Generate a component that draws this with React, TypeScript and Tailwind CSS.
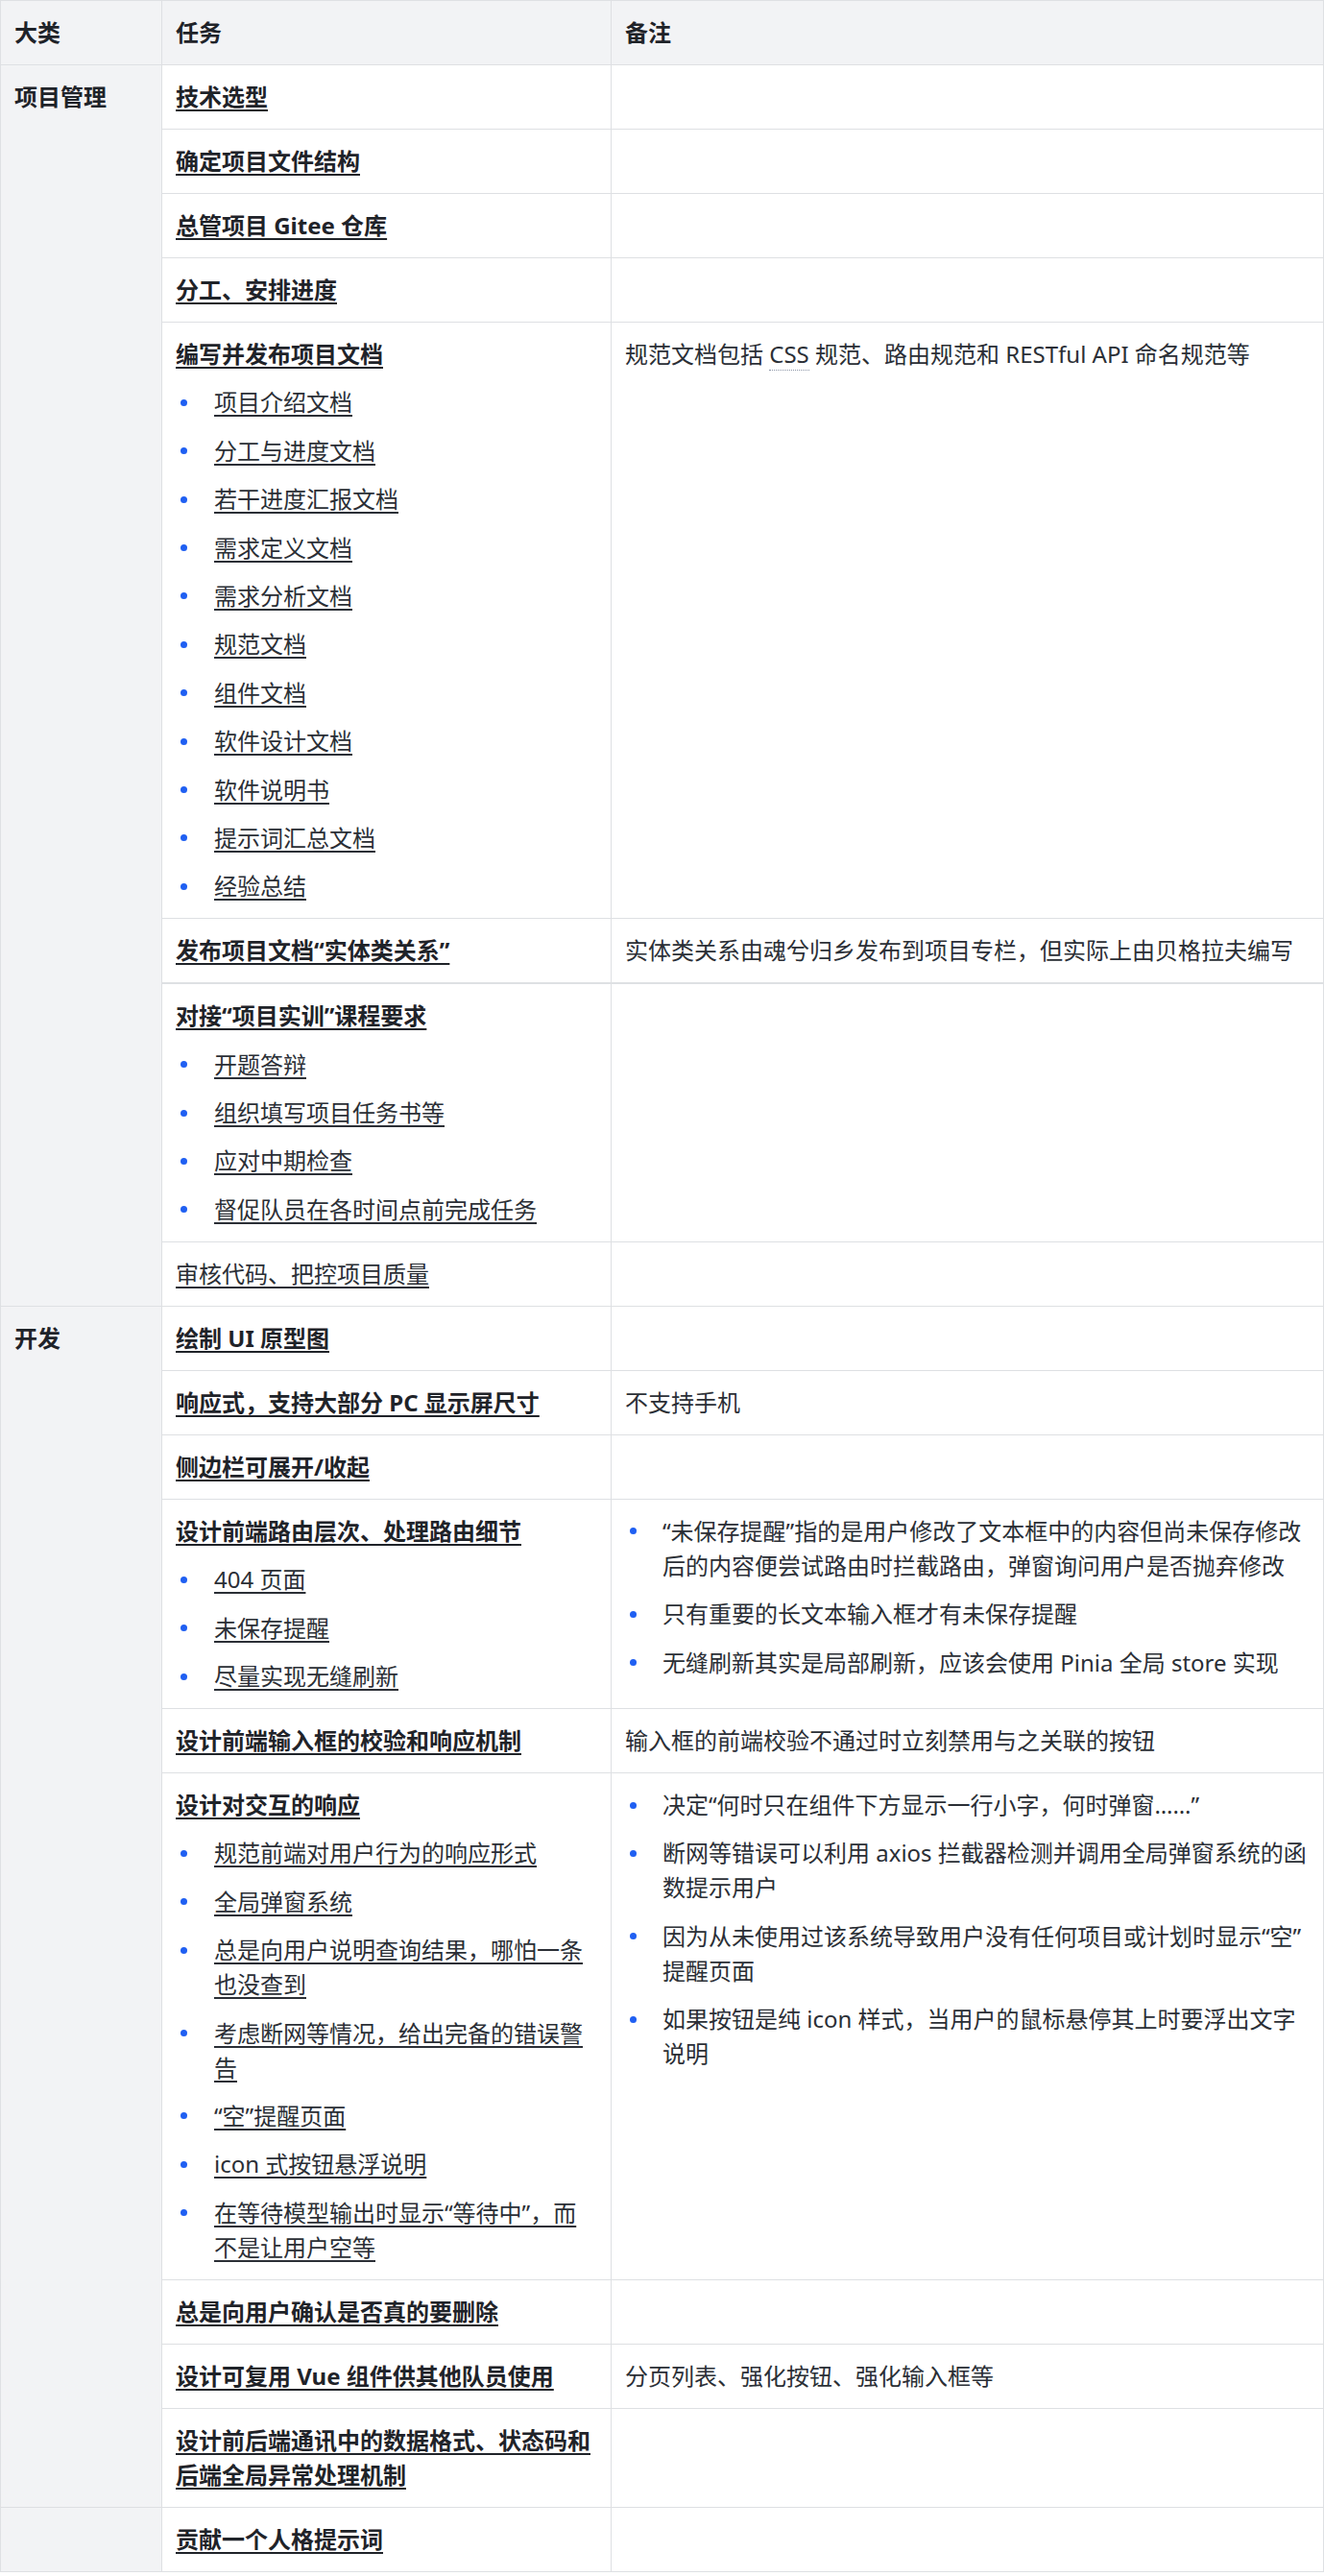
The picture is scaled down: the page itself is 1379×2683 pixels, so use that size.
import type { ReactNode } from 'react';

type Row = {
  task: string;
  bold?: boolean;
  items?: string[];
  note?: ReactNode;
  notes?: string[];
  thick?: boolean;
};

type Group = { name: string; rows: Row[] };

const groups: Group[] = [
  {
    name: '项目管理',
    rows: [
      { task: '技术选型', bold: true },
      { task: '确定项目文件结构', bold: true },
      { task: '总管项目 Gitee 仓库', bold: true },
      { task: '分工、安排进度', bold: true },
      {
        task: '编写并发布项目文档',
        bold: true,
        items: [
          '项目介绍文档',
          '分工与进度文档',
          '若干进度汇报文档',
          '需求定义文档',
          '需求分析文档',
          '规范文档',
          '组件文档',
          '软件设计文档',
          '软件说明书',
          '提示词汇总文档',
          '经验总结',
        ],
        note: (
          <>
            规范文档包括{' '}
            <abbr className="no-underline border-b border-dotted border-[#8a94a6]">CSS</abbr>{' '}
            规范、路由规范和 RESTful API 命名规范等
          </>
        ),
      },
      {
        task: '发布项目文档“实体类关系”',
        bold: true,
        note: '实体类关系由魂兮归乡发布到项目专栏，但实际上由贝格拉夫编写',
      },
      {
        task: '对接“项目实训”课程要求',
        bold: true,
        thick: true,
        items: ['开题答辩', '组织填写项目任务书等', '应对中期检查', '督促队员在各时间点前完成任务'],
      },
      { task: '审核代码、把控项目质量' },
    ],
  },
  {
    name: '开发',
    rows: [
      { task: '绘制 UI 原型图', bold: true },
      { task: '响应式，支持大部分 PC 显示屏尺寸', bold: true, note: '不支持手机' },
      { task: '侧边栏可展开/收起', bold: true },
      {
        task: '设计前端路由层次、处理路由细节',
        bold: true,
        items: ['404 页面', '未保存提醒', '尽量实现无缝刷新'],
        notes: [
          '“未保存提醒”指的是用户修改了文本框中的内容但尚未保存修改后的内容便尝试路由时拦截路由，弹窗询问用户是否抛弃修改',
          '只有重要的长文本输入框才有未保存提醒',
          '无缝刷新其实是局部刷新，应该会使用 Pinia 全局 store 实现',
        ],
      },
      {
        task: '设计前端输入框的校验和响应机制',
        bold: true,
        note: '输入框的前端校验不通过时立刻禁用与之关联的按钮',
      },
      {
        task: '设计对交互的响应',
        bold: true,
        items: [
          '规范前端对用户行为的响应形式',
          '全局弹窗系统',
          '总是向用户说明查询结果，哪怕一条也没查到',
          '考虑断网等情况，给出完备的错误警告',
          '“空”提醒页面',
          'icon 式按钮悬浮说明',
          '在等待模型输出时显示“等待中”，而不是让用户空等',
        ],
        notes: [
          '决定“何时只在组件下方显示一行小字，何时弹窗……”',
          '断网等错误可以利用 axios 拦截器检测并调用全局弹窗系统的函数提示用户',
          '因为从未使用过该系统导致用户没有任何项目或计划时显示“空”\u200B提醒页面',
          '如果按钮是纯 icon 样式，当用户的鼠标悬停其上时要浮出文字说明',
        ],
      },
      { task: '总是向用户确认是否真的要删除', bold: true },
      { task: '设计可复用 Vue 组件供其他队员使用', bold: true, note: '分页列表、强化按钮、强化输入框等' },
      { task: '设计前后端通讯中的数据格式、状态码和后端全局异常处理机制', bold: true },
    ],
  },
  {
    name: '',
    rows: [{ task: '贡献一个人格提示词', bold: true }],
  },
];

function Bullets({ list, first, link }: { list: string[]; first?: boolean; link?: boolean }) {
  return (
    <ul className={first ? '' : 'mt-[14.4px]'}>
      {list.map((t, i) => (
        <li key={t} className={`flex ${i > 0 ? 'mt-[14.4px]' : ''}`}>
          <span
            className={`flex h-[36px] shrink-0 items-center ${link ? 'w-[40px] pl-[5px]' : 'w-[39px] pl-[5px]'}`}
          >
            <span className="h-[7px] w-[7px] rounded-full bg-[#1f5ff2]" />
          </span>
          <span className={link ? 'underline decoration-2 underline-offset-[4px]' : ''}>{t}</span>
        </li>
      ))}
    </ul>
  );
}

const cell = 'border border-[#dee0e3] px-[14px] py-[15px] align-top';

export default function App() {
  return (
    <div className="bg-white text-[24px] leading-[36px] text-[#2b2f36] [font-family:'Noto_Sans','Noto_Sans_CJK_SC',sans-serif]">
      <table className="w-full table-fixed border-collapse">
        <colgroup>
          <col className="w-[168px]" />
          <col className="w-[468px]" />
          <col />
        </colgroup>
        <thead>
          <tr className="bg-[#f2f3f5] text-left font-bold text-[#1f2329]">
            <th className={cell}>大类</th>
            <th className={cell}>任务</th>
            <th className={cell}>备注</th>
          </tr>
        </thead>
        <tbody>
          {groups.map((g) =>
            g.rows.map((r, i) => (
              <tr key={g.name + r.task}>
                {i === 0 && (
                  <td rowSpan={g.rows.length} className={`${cell} bg-[#f2f3f5] font-bold text-[#1f2329]`}>
                    {g.name}
                  </td>
                )}
                <td className={`${cell} ${r.thick ? 'border-t-2' : ''}`}>
                  <span
                    className={`underline decoration-2 underline-offset-[4px] ${
                      r.bold ? 'font-bold text-[#1f2329]' : ''
                    }`}
                  >
                    {r.task}
                  </span>
                  {r.items && <Bullets list={r.items} link />}
                </td>
                <td className={`${cell} ${r.thick ? 'border-t-2' : ''}`}>
                  {r.note}
                  {r.notes && <Bullets list={r.notes} first />}
                </td>
              </tr>
            ))
          )}
        </tbody>
      </table>
    </div>
  );
}
